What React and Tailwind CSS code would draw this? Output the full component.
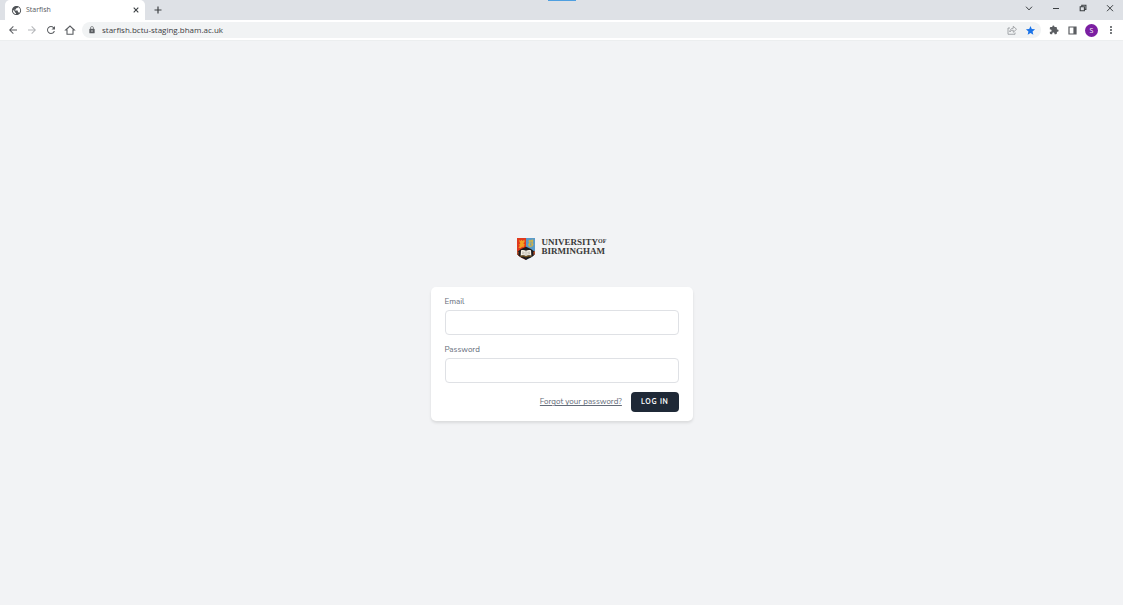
import React from 'react';
import { MdArrowBack, MdArrowForward, MdRefresh, MdPublic, MdLock, MdStar, MdExtension, MdMoreVert } from 'react-icons/md';

function IconButton({ label, children }) {
  return (
    <button type="button" aria-label={label} className="flex h-4 w-[19px] shrink-0 items-center justify-center text-[#5a5d61]">
      {children}
    </button>
  );
}

function WindowButton({ label, children }) {
  return (
    <button type="button" aria-label={label} className="flex h-4 w-[27px] items-center justify-center">
      <svg viewBox="0 0 10 10" className="size-[10px]" fill="none" stroke="#3c4043" strokeWidth="1">
        {children}
      </svg>
    </button>
  );
}

function TabStrip() {
  return (
    <div className="relative flex h-5 items-start justify-between bg-[#dee1e6] pl-[5px]">
      <div className="absolute top-0 left-1/2 h-px w-7 -ml-[14px] bg-[#4f9fe0]" />
      <div className="flex h-5 items-center">
        <div className="flex h-5 w-[140px] items-center rounded-t-[5px] bg-white pr-[5px] pl-[6px]">
          <MdPublic className="size-[11px] shrink-0 text-[#4f5357]" />
          <span className="ml-1 flex-1 font-['Open_Sans',sans-serif] text-[7px] leading-[10px] text-[#55585c]">Starfish</span>
          <button type="button" aria-label="Close tab" className="flex size-[9px] items-center justify-center">
            <svg viewBox="0 0 6 6" className="size-[6px]" stroke="#3c4043" strokeWidth="1.1">
              <path d="M.7.7l4.6 4.6M5.3.7L.7 5.3" />
            </svg>
          </button>
        </div>
        <button type="button" aria-label="New tab" className="ml-2 flex size-[10px] items-center justify-center">
          <svg viewBox="0 0 8 8" className="size-2" stroke="#3c4043" strokeWidth="1.2">
            <path d="M4 .5v7M.5 4h7" />
          </svg>
        </button>
      </div>
      <div className="flex">
        <WindowButton label="Search tabs"><path d="M2 3.7L5 6.9l3-3.2" /></WindowButton>
        <WindowButton label="Minimize"><path d="M2 5.5h6" /></WindowButton>
        <WindowButton label="Restore"><path d="M2.2 3.7h4.2v4.1H2.2zM3.8 3.4V2.3h4.1v4.1H6.8" strokeWidth="1.1" /></WindowButton>
        <WindowButton label="Close"><path d="M2 2.2l6 6M8 2.2l-6 6" /></WindowButton>
      </div>
    </div>
  );
}

function Toolbar() {
  return (
    <div className="flex h-[21px] items-center border-b border-[#eceeef] bg-white px-[3px]">
      <IconButton label="Back"><MdArrowBack className="size-3" /></IconButton>
      <IconButton label="Forward"><MdArrowForward className="size-3 text-[#b4b6b9]" /></IconButton>
      <IconButton label="Reload"><MdRefresh className="size-3" /></IconButton>
      <IconButton label="Home">
        <svg viewBox="0 0 24 24" className="size-3" fill="none" stroke="currentColor" strokeWidth="2.2">
          <path d="M3.4 12L12 4.200l8.600 7.800H18v8.400H6V12z" />
        </svg>
      </IconButton>
      <div className="mx-[3px] flex h-4 flex-1 items-center rounded-full bg-[#f1f3f4] pr-px pl-[6px]">
        <MdLock className="size-2 shrink-0 text-[#5a5d61]" />
        <input
          aria-label="Address"
          defaultValue="starfish.bctu-staging.bham.ac.uk"
          className="ml-[6px] h-3 min-w-0 flex-1 bg-transparent font-['Open_Sans',sans-serif] text-[8px] leading-3 text-[#3c4043] outline-none"
        />
        <IconButton label="Share">
          <svg viewBox="0 0 20 20" className="size-[10px]" fill="none" stroke="#909397" strokeWidth="1.6">
            <path d="M6 6H2v12.500h14V15" />
            <path d="M5.500 14c.4-4.800 3-7.500 7-7.500V2.500L19 8.500l-6.500 6v-4c-3 0-5.200.9-7 3.500z" />
          </svg>
        </IconButton>
        <IconButton label="Bookmark"><MdStar className="size-[11px] text-[#1a73e8]" /></IconButton>
      </div>
      <IconButton label="Extensions"><MdExtension className="size-[10px]" /></IconButton>
      <IconButton label="Side panel">
        <svg viewBox="0 0 9 9" className="size-[9px]" fill="none" stroke="currentColor">
          <path d="M1 1h7v7H1z" strokeWidth="1.2" />
          <path d="M6.700 1v7" strokeWidth="2.600" />
        </svg>
      </IconButton>
      <button type="button" aria-label="Profile" className="flex w-[19px] shrink-0 items-center justify-center">
        <span className="flex size-[13px] items-center justify-center rounded-full bg-[#7b1fa2] font-['Open_Sans',sans-serif] text-[7px] leading-none text-white">S</span>
      </button>
      <IconButton label="Menu"><MdMoreVert className="size-3" /></IconButton>
    </div>
  );
}

function Crest() {
  return (
    <svg viewBox="0 0 54 66" className="h-[22px] w-[18px]" aria-hidden="true">
      <defs>
        <clipPath id="shield"><path d="M0 0h54v44c0 11-15 15-27 22C15 59 0 55 0 44z" /></clipPath>
      </defs>
      <g clipPath="url(#shield)">
        <path fill="#e0391c" d="M0 0h27v66H0z" />
        <path fill="#5b9bc8" d="M27 0h27v66H27z" />
        <path fill="#f2a020" d="M5 5l5 4 3-4 4 4 5-4 1 7-4 4 5 5-4 2 1 5-5-2-5 4-7-1 5-6-4-3 5-3z" />
        <path fill="#cbb04e" d="M47 4l-6 3-4-2-3 5 3 4-4 5 2 6 5 3 7-3 3-6-3-4 2-6z" />
        <path fill="#5b9bc8" d="M41 10l3 3-2 5 2 4-3 2-2-4 2-5z" />
        <path fill="#1c1a1d" d="M0 42l12-9 15-7 15 7 12 9v24H0z" />
        <path fill="#b8502a" d="M0 38l5 4-1 11-4 3zM54 38l-5 4 1 11 4 3z" />
        <path fill="#f8f4e8" d="M12 37c6-2 10-1 15 1 5-2 9-3 15-1l1 16c-6-2-11-2-16 1-5-3-10-3-16-1z" />
        <path fill="none" stroke="#77706a" strokeWidth="1.500" d="M27 38v14M15 42l8 1M15 47l8 1M31 43l8-1M31 48l8-1" />
        <path fill="none" stroke="#c58b23" strokeWidth="2" d="M10 55c7-2 12-1 17 2 5-3 10-4 17-2" />
      </g>
    </svg>
  );
}

function Logo() {
  return (
    <a href="#home" className="flex h-6 items-start gap-[7px] text-[#3a3a3a]">
      <Crest />
      <span className="font-['Liberation_Serif',serif] text-[9px] leading-[9px] font-bold">
        <span className="flex items-start">UNIVERSITY<span className="text-[6px] leading-[7px]">OF</span></span>
        <span className="block">BIRMINGHAM</span>
      </span>
    </a>
  );
}

function Field({ id, label, type }) {
  return (
    <div className="flex flex-col gap-[2px]">
      <label htmlFor={id} className="text-[8px] leading-3 text-[#636b78]">{label}</label>
      <input id={id} type={type} className="h-[25px] w-full rounded-[4px] border border-[#dfe1e5] bg-white px-2 text-[9px] text-gray-800 outline-none" />
    </div>
  );
}

export default function App() {
  return (
    <div className="flex min-h-screen flex-col bg-[#f2f3f5]">
      <header>
        <TabStrip />
        <Toolbar />
      </header>
      <main className="flex flex-1 flex-col items-center justify-center pt-[13px] font-[Nunito,Lato,sans-serif]">
        <Logo />
        <form onSubmit={(e) => e.preventDefault()} className="mt-[25px] flex w-[262px] flex-col gap-[9px] rounded-[5px] bg-white px-[14px] pt-[9px] pb-[9px] shadow-[0_2px_3px_rgba(0,0,0,0.1)]">
          <Field id="email" label="Email" type="email" />
          <Field id="password" label="Password" type="password" />
          <div className="flex items-center justify-end gap-[9px]">
            <a href="#forgot" className="text-[8px] leading-3 text-[#636b78] underline">Forgot your password?</a>
            <button type="submit" className="h-5 rounded-[4px] bg-[#1f2937] px-[10px] text-[7px] leading-3 font-bold tracking-widest text-white uppercase">Log in</button>
          </div>
        </form>
      </main>
    </div>
  );
}
